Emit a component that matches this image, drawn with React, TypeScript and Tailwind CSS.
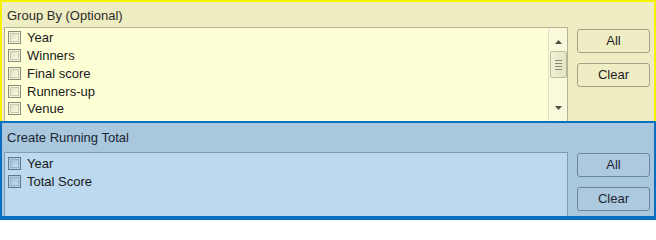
import React from "react";

const groupFields = ["Year", "Winners", "Final score", "Runners-up", "Venue"];
const totalFields = ["Year", "Total Score"];

type Theme = "yellow" | "blue";

const Check = ({ theme }: { theme: Theme }) => (
  <span
    className={
      theme === "yellow"
        ? "w-[13px] h-[13px] shrink-0 border border-[#8c8c80] bg-[#f4f2d0] p-[1px]"
        : "w-[13px] h-[13px] shrink-0 border border-[#5f7a8f] bg-[#b4cfe4] p-[1px]"
    }
  >
    <span
      className={
        theme === "yellow"
          ? "block w-full h-full border border-[#cdcbad] bg-gradient-to-br from-[#e2e0c0] to-[#fbfae6]"
          : "block w-full h-full border border-[#95b0c5] bg-gradient-to-br from-[#a3bdd2] to-[#c6dff2]"
      }
    />
  </span>
);

const Row = ({ label, theme }: { label: string; theme: Theme }) => (
  <div className="h-[17.75px] flex items-center pl-[3px] gap-[6px]">
    <Check theme={theme} />
    <span className="text-[13px] leading-none text-[#1a1a1a]">{label}</span>
  </div>
);

const Btn = ({ label, theme }: { label: string; theme: Theme }) => (
  <button
    className={
      theme === "yellow"
        ? "h-[24px] w-full rounded-[3px] border border-[#a5a386] bg-[#efedc4] text-[13px] text-[#1e1e1e]"
        : "h-[24px] w-full rounded-[3px] border border-[#6a879f] bg-[#acc9df] text-[13px] text-[#1d2630]"
    }
  >
    {label}
  </button>
);

const ScrollBar = () => (
  <div className="w-[19px] h-full border-l border-[#e3e1c3] bg-[#faf9dc] flex flex-col items-center">
    <div className="h-[23px] w-full flex items-center justify-center pt-[4px]">
      <svg width="7" height="4" viewBox="0 0 7 4">
        <path d="M0 4 L3.5 0 L7 4 Z" fill="#4d4d40" />
      </svg>
    </div>
    <div className="h-[27px] w-[17px] rounded-[2px] border border-[#bebc9c] bg-gradient-to-r from-[#f3f1d3] to-[#e6e4c6] flex flex-col items-center justify-center gap-[2px]">
      <span className="block w-[7px] h-[1px] bg-[#8a8870]" />
      <span className="block w-[7px] h-[1px] bg-[#8a8870]" />
      <span className="block w-[7px] h-[1px] bg-[#8a8870]" />
      <span className="block w-[7px] h-[1px] bg-[#8a8870]" />
    </div>
    <div className="flex-1" />
    <div className="h-[22px] w-full flex items-center justify-center pb-[4px]">
      <svg width="7" height="4" viewBox="0 0 7 4">
        <path d="M0 0 L7 0 L3.5 4 Z" fill="#4d4d40" />
      </svg>
    </div>
  </div>
);

export default function App() {
  return (
    <div className="w-[656px] h-[220px] flex flex-col bg-white font-['Liberation_Sans',Arial,sans-serif]">
      {/* Group By panel */}
      <div className="h-[121px] flex flex-col border-2 border-b-0 border-[#f7f300] bg-[#efedc2]">
        <div className="h-[25px] pl-[5px] pt-[4px] text-[13px] text-[#2b2b2b]">
          Group By (Optional)
        </div>
        <div className="flex flex-1 min-h-0">
          <div className="ml-[2px] w-[564px] flex border border-b-0 border-[#b3b197] bg-[#ffffd6]">
            <div className="flex-1 pt-[1px]">
              {groupFields.map((f) => (
                <Row key={f} label={f} theme="yellow" />
              ))}
            </div>
            <ScrollBar />
          </div>
          <div className="ml-[9px] w-[73px] pt-[2px] flex flex-col gap-[10px]">
            <Btn label="All" theme="yellow" />
            <Btn label="Clear" theme="yellow" />
          </div>
        </div>
      </div>

      {/* Running total panel */}
      <div className="h-[99px] flex flex-col border-2 border-b-4 border-[#0a6fbf] bg-[#a9c7dd]">
        <div className="h-[29px] pl-[5px] pt-[5px] text-[13px] text-[#1b2633]">
          Create Running Total
        </div>
        <div className="flex flex-1 min-h-0">
          <div className="ml-[2px] w-[564px] border border-b-0 border-[#7f9bb2] bg-[#bcd9ef] pt-[2px]">
            {totalFields.map((f) => (
              <Row key={f} label={f} theme="blue" />
            ))}
          </div>
          <div className="ml-[9px] w-[73px] pt-[1px] flex flex-col gap-[10px]">
            <Btn label="All" theme="blue" />
            <Btn label="Clear" theme="blue" />
          </div>
        </div>
      </div>
    </div>
  );
}
